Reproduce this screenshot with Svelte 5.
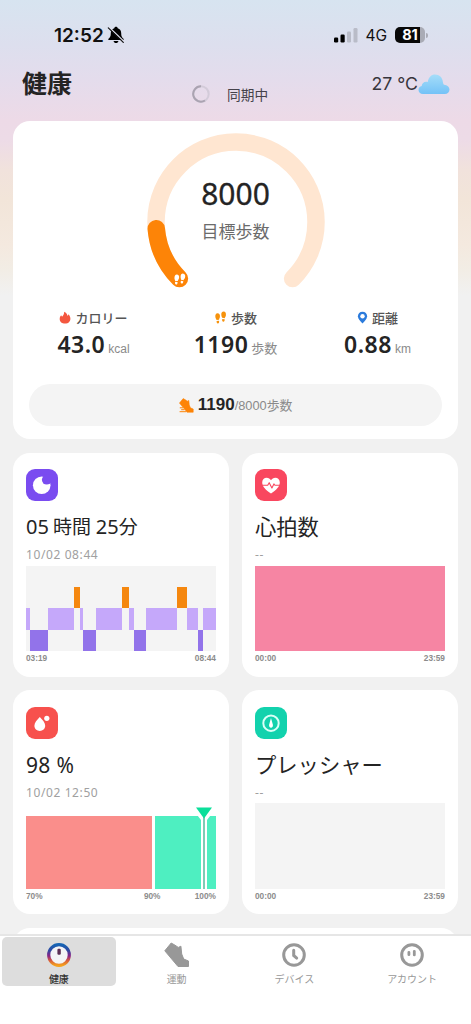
<script>
    // Daily goal and progress
    const goal = 8000;
    const steps = 1190;

    // 270 degree ring, the gap is at the bottom
    const ringLength = 2 * Math.PI * 80 * 0.75;
    const progress = ringLength * (steps / goal);

    // Sleep stages in order, width is relative
    const sleep = [
        { stage: "light", width: 12 },
        { stage: "deep", width: 53 },
        { stage: "light", width: 79 },
        { stage: "awake", width: 18 },
        { stage: "light", width: 10 },
        { stage: "deep", width: 38 },
        { stage: "light", width: 79 },
        { stage: "awake", width: 22 },
        { stage: "light", width: 13 },
        { stage: "deep", width: 37 },
        { stage: "light", width: 93 },
        { stage: "awake", width: 29 },
        { stage: "light", width: 34 },
        { stage: "deep", width: 16 },
        { stage: "light", width: 38 }
    ];

    const tabs = [
        { id: "health", label: "健康" },
        { id: "sport", label: "運動" },
        { id: "device", label: "デバイス" },
        { id: "account", label: "アカウント" }
    ];

    let active = $state("health");
</script>

{#snippet feet()}
    <path transform="translate(.5 1.300)" d="M1 5C.5 2.400 1.500.6 3.300.6s2.900 1.600 2.600 3.700C5.700 5.700 5.100 6.500 4.900 7.500L2.200 7.900C2 6.900 1.200 6.200 1 5zM2.300 8.900l2.600-.3c.4 1.700-.1 2.900-1.200 3-1 .1-1.500-1-1.400-2.700z" />
    <path d="M12.800 4.400c.4-2.600-.6-4.300-2.400-4.300S7.600 1.600 7.900 3.700c.1 1.400.7 2.200.9 3.200l2.800.4c.2-1.100 1-1.700 1.200-2.900zM11.500 8.300L8.900 8c-.4 1.700.1 2.900 1.200 3 1 .1 1.500-1 1.400-2.700z" />
{/snippet}

{#snippet shoe()}
    <path d="M7.200 1L.8 8.800 14 24.500h10.500V19l-4.800-2-2-5-.8-7.800-2.600 1.200L11 3.200z" stroke-linejoin="round" />
{/snippet}

<div class="screen">
    <div class="status">
        <span class="time">12:52</span>
        <svg class="bell" width="18" height="18" viewBox="0 0 18 18">
            <path d="M9 .8c1 0 1.600.6 1.700 1.400 2.300.7 3.500 2.500 3.500 5 0 3 .6 4.100 2.300 5.600.5.500.2 1.300-.5 1.300H2c-.7 0-1-.8-.5-1.300C3.200 11.300 3.800 10.200 3.800 7.200c0-2.500 1.200-4.300 3.500-5C7.400 1.400 8 .8 9 .8zM6.600 14.900h4.800c-.2 1.300-1.200 2.100-2.400 2.100s-2.200-.8-2.400-2.100z" />
            <path d="M2.100 1.200l14.900 14.300" stroke="#dfe0ee" stroke-width="1.300" />
            <path d="M1.300 1.900l15 14.500" stroke="#111" stroke-width="1.200" stroke-linecap="round" />
        </svg>
        <svg class="signal" width="24" height="15" viewBox="0 0 24 15">
            <rect x="0" y="9.500" width="4.200" height="5" rx="1.200" />
            <rect x="6.500" y="6.500" width="4.200" height="8" rx="1.200" />
            <rect x="13" y="3.500" width="4" height="11" rx="1.200" fill="#b9bcc8" />
            <rect x="19.500" y="0" width="4" height="14.500" rx="1.200" fill="#b9bcc8" />
        </svg>
        <span class="network">4G</span>
        <div class="battery"><span>81</span></div>
        <i class="cap"></i>
    </div>

    <header>
        <h1>健康</h1>
        <div class="sync">
            <svg width="18" height="18" viewBox="0 0 18 18" fill="none" stroke-width="2">
                <circle cx="9" cy="9" r="7.700" stroke="#d3cbd9" />
                <path d="M13 15.500A7.700 7.700 0 1 1 9 1.300" stroke="#aaa3b1" />
            </svg>
            <span>同期中</span>
        </div>
        <div class="weather">
            <span>27 °C</span>
            <svg width="32" height="22" viewBox="0 0 32 22">
                <defs>
                    <linearGradient id="cloud" x1="0" y1="0" x2="0" y2="1">
                        <stop offset="0" stop-color="#a5ddf9" />
                        <stop offset="1" stop-color="#74c2f7" />
                    </linearGradient>
                </defs>
                <path d="M5 21C2.200 21 .5 19.300.5 17c0-2 1.300-3.500 3.200-3.900.2-2.700 2-4.300 4.400-4.300.7 0 1.200.1 1.700.3C10.600 4.100 13.400 1.500 17 1.500c4.400 0 7.400 3 7.900 7.400.2 1.300.5 2.300 1.300 2.900 3 .6 5.300 2 5.300 4.700s-2 4.500-4.700 4.500z" fill="url(#cloud)" />
            </svg>
        </div>
    </header>

    <main>
        <section class="card summary">
            <div class="ring">
                <svg width="178" height="156" viewBox="0 0 178 156" fill="none">
                    <path d="M32.400 145.600A80 80 0 1 1 145.600 145.600" stroke="#ffe6d1" stroke-width="17.500" stroke-linecap="round" />
                    <path
                        d="M32.400 145.600A80 80 0 1 1 145.600 145.600"
                        stroke="#fd8407"
                        stroke-width="17.500"
                        stroke-linecap="round"
                        stroke-dasharray="{progress} 999"
                    />
                    <g fill="#fff" transform="translate(26 140) rotate(8 6 6) scale(.92)">{@render feet()}</g>
                </svg>
                <div class="goal">
                    <strong>{goal}</strong>
                    <span>目標歩数</span>
                </div>
            </div>

            <div class="stats">
                <div class="stat">
                    <div class="name">
                        <svg width="12" height="13" viewBox="0 0 12 13" fill="#f4573f">
                            <path d="M5.200.8c2 1 3 2.400 3.200 3.900.6-.3.9-.8 1-1.500 1.400 1.300 2 2.900 2 4.500 0 3-2.300 4.900-5.300 4.900S.7 10.700.7 7.900c0-1.600.6-2.700 1.500-3.700.2.8.6 1.200 1.200 1.400.9-1.200 1.900-2.500 1.800-4.800z" />
                        </svg>
                        カロリー
                    </div>
                    <div class="value"><b>43.0</b><small>kcal</small></div>
                </div>
                <div class="stat">
                    <div class="name">
                        <svg width="13" height="13" viewBox="0 0 14 13" fill="#f6920c">{@render feet()}</svg>
                        歩数
                    </div>
                    <div class="value"><b>{steps}</b><small class="jp">歩数</small></div>
                </div>
                <div class="stat">
                    <div class="name">
                        <svg width="11" height="13" viewBox="0 0 11 13">
                            <path d="M5.500.8c2.700 0 4.600 1.900 4.600 4.500 0 2.700-2.500 5.200-4.600 7.100C3.400 10.500.9 8 .9 5.300.9 2.700 2.800.8 5.500.8z" fill="#2b7bdc" />
                            <circle cx="5.500" cy="5.300" r="2.200" fill="#fff" />
                        </svg>
                        距離
                    </div>
                    <div class="value"><b>0.88</b><small>km</small></div>
                </div>
            </div>

            <div class="pill">
                <svg width="15" height="15" viewBox="0 0 15 15" fill="#fd8407" stroke="#fd8407">
                    <g transform="scale(.58)">{@render shoe()}</g>
                    <path d="M.8 9.800h3.400M2.200 11.700h3.400M.6 13.700h6.800" stroke-width="1" />
                </svg>
                <div><b>{steps}</b><span>/{goal}歩数</span></div>
            </div>
        </section>

        <section class="card">
            <svg class="icon" width="32" height="32" viewBox="0 0 32 32">
                <rect width="32" height="32" rx="9" fill="#7a4cf0" />
                <circle cx="15.700" cy="16.200" r="8.800" fill="#fff" />
                <circle cx="20.700" cy="10.800" r="4.800" fill="#7a4cf0" />
                <path d="M17 6l9-1v10z" fill="#7a4cf0" />
            </svg>
            <h2 class="duration"><b>05</b><i></i>時間 <b>25</b>分</h2>
            <time>10/02 08:44</time>
            <div class="chart sleep">
                {#each sleep as part}
                    <div class={part.stage} style="flex-grow: {part.width}"></div>
                {/each}
            </div>
            <div class="axis"><span>03:19</span><span>08:44</span></div>
        </section>

        <section class="card">
            <svg class="icon" width="32" height="32" viewBox="0 0 32 32">
                <rect width="32" height="32" rx="9" fill="#f9475f" />
                <path d="M16 24.500C11 21 7.200 17.500 7.200 13.400c0-2.800 2-4.700 4.500-4.700 1.800 0 3.300.9 4.300 2.500 1-1.600 2.500-2.500 4.300-2.500 2.500 0 4.500 1.900 4.500 4.700 0 4.100-3.800 7.600-8.800 11.100z" fill="#fff" />
                <path d="M7 16.300h5.700l1.500-2.600 2.700 5.200 2-4 1 1.400H25" fill="none" stroke="#f9475f" stroke-width="1.100" stroke-linejoin="round" />
            </svg>
            <h2>心拍数</h2>
            <time>--</time>
            <div class="chart heart"></div>
            <div class="axis"><span>00:00</span><span>23:59</span></div>
        </section>

        <section class="card">
            <svg class="icon" width="32" height="32" viewBox="0 0 32 32">
                <rect width="32" height="32" rx="9" fill="#f7514d" />
                <path d="M13.800 10c2.800 3 5.400 5.700 5.400 8.700 0 3.100-2.400 5.200-5.400 5.200s-5.400-2.100-5.400-5.200c0-3 2.600-5.700 5.400-8.700z" fill="#fff" />
                <circle cx="20.800" cy="11.300" r="2.600" fill="#fff" />
            </svg>
            <h2 class="percent">98 %</h2>
            <time>10/02 12:50</time>
            <div class="chart oxygen">
                <div class="low"></div>
                <div class="good"></div>
                <svg class="marker" width="16" height="82" viewBox="0 0 16 82">
                    <path d="M1.500 8.500h13L11 13v69H5V13z" fill="#fff" />
                    <path d="M7.300 8h1.400v74H7.300z" fill="#47b795" />
                    <path d="M0 .5h16L8 11.500z" fill="#0bdf9a" />
                </svg>
            </div>
            <div class="axis"><span>70%</span><span class="mid">90%</span><span>100%</span></div>
        </section>

        <section class="card">
            <svg class="icon" width="32" height="32" viewBox="0 0 32 32">
                <rect width="32" height="32" rx="9" fill="#12d2ad" />
                <circle cx="16" cy="16.200" r="7.700" fill="none" stroke="#d9fff7" stroke-width="2" />
                <path d="M16 11l1.900 6.800c.3 1.700-.6 2.900-1.900 2.900s-2.200-1.200-1.900-2.900z" fill="#fff" />
            </svg>
            <h2 class="kana">プレッシャー</h2>
            <time>--</time>
            <div class="chart"></div>
            <div class="axis"><span>00:00</span><span>23:59</span></div>
        </section>

        <section class="card wide"></section>
    </main>

    <nav>
        {#each tabs as tab}
            <button class:active={active === tab.id} onclick={() => (active = tab.id)}>
                <svg width="26" height="26" viewBox="0 0 26 26" fill="none">
                    {#if tab.id === "health"}
                        <defs>
                            <linearGradient id="rainbow" x1="0" y1="0" x2="0" y2="1">
                                <stop offset="0" stop-color="#1664b4" />
                                <stop offset=".28" stop-color="#3048a0" />
                                <stop offset=".55" stop-color="#8a2387" />
                                <stop offset=".78" stop-color="#d9603c" />
                                <stop offset="1" stop-color="#f5a01c" />
                            </linearGradient>
                        </defs>
                        <circle cx="13" cy="13" r="10.300" fill="#f4f4f6" stroke="url(#rainbow)" stroke-width="3.200" />
                        <rect x="11.400" y="6.800" width="3.400" height="6" rx="1.200" fill="#5b2f55" />
                    {:else if tab.id === "sport"}
                        <g fill="#989898" stroke="#989898">{@render shoe()}</g>
                    {:else if tab.id === "device"}
                        <circle cx="13" cy="13" r="10.300" stroke="#989898" stroke-width="3" />
                        <path d="M12.700 8.300v5.200l3 2.600" stroke="#989898" stroke-width="3" stroke-linecap="round" />
                    {:else}
                        <circle cx="13" cy="13" r="10.300" stroke="#989898" stroke-width="3" />
                        <path d="M9.900 10.300v2.400M15.300 9.300v3.600" stroke="#989898" stroke-width="2.800" stroke-linecap="round" />
                    {/if}
                </svg>
                <span>{tab.label}</span>
            </button>
        {/each}
    </nav>
</div>

<style>
    :global(body) {
        margin: 0;
        overflow: hidden;
    }

    .screen {
        display: flex;
        flex-direction: column;
        width: 471px;
        height: 1024px;
        overflow: hidden;
        color: #242424;
        font-family: "Noto Sans", "Noto Sans CJK JP", sans-serif;
        background: linear-gradient(#d7e4f0 0, #dddfee 45px, #e4dcec 80px, #eddae7 120px, #eddbe7 140px, #f1e2dc 170px, #f2e5d9 200px, #f4e9df 245px, #f2ede5 270px, #f1f1f1 295px);
    }

    /* Status bar */
    .status {
        display: flex;
        align-items: center;
        box-sizing: border-box;
        height: 58px;
        padding: 12px 43px 0 54px;
        color: #111;
        font-family: Inter, sans-serif;
    }

    .time {
        width: 52px;
        font-size: 19px;
        font-weight: 600;
    }

    .bell {
        margin-left: 1px;
    }

    .signal {
        margin-left: auto;
    }

    .network {
        margin-left: 7px;
        font-size: 15.500px;
    }

    .battery {
        width: 30px;
        height: 16px;
        margin-left: 8px;
        border-radius: 5px;
        background: linear-gradient(90deg, #080808 83%, #a9abb5 83%);
        color: #fff;
        font-size: 14.500px;
        font-weight: 700;
        line-height: 16px;
        text-align: center;
    }

    .cap {
        width: 2px;
        height: 5px;
        margin-left: 1px;
        border-radius: 0 2px 2px 0;
        background: #a9abb5;
    }

    /* Title row */
    header {
        display: grid;
        grid-template-columns: 170px 1fr 170px;
        height: 63px;
        font-family: "Noto Sans CJK JP", sans-serif;
    }

    h1 {
        margin: 6px 0 0 22px;
        font-size: 25px;
        font-weight: 700;
        line-height: 36px;
    }

    .sync {
        display: flex;
        align-items: center;
        gap: 17px;
        height: 20px;
        margin: 26px 0 0 22px;
        color: #45424a;
        font-size: 13.700px;
        font-weight: 400;
    }

    .weather {
        display: flex;
        justify-content: flex-end;
        height: 36px;
        margin-right: 21px;
        padding-top: 15px;
        color: #37353c;
        font-family: Inter, sans-serif;
        font-size: 17.700px;
        line-height: 22px;
    }

    /* Cards */
    main {
        display: grid;
        grid-template-columns: 216px 216px;
        grid-template-rows: 318px;
        grid-auto-rows: 224px;
        gap: 13.500px 13px;
        flex: 1;
        min-height: 0;
        padding: 0 13px;
        overflow: hidden;
    }

    .card {
        box-sizing: border-box;
        padding: 16.500px 13px 0;
        border-radius: 17px;
        background: #fff;
    }

    .summary {
        grid-column: span 2;
        padding: 12px 16px 0;
    }

    .wide {
        grid-column: span 2;
    }

    .ring {
        display: grid;
        justify-content: center;
        height: 173px;
    }

    .ring > * {
        grid-area: 1 / 1;
    }

    .goal {
        display: flex;
        flex-direction: column;
        align-items: center;
        padding-top: 41px;
    }

    .goal strong {
        font-size: 30px;
        font-weight: 400;
        line-height: 40px;
        -webkit-text-stroke: 0.3px #242424;
    }

    .goal span {
        margin-top: 6px;
        color: #6b6b6b;
        font-size: 17px;
        line-height: 24px;
    }

    .stats {
        display: grid;
        grid-template-columns: 129px 155px 129px;
    }

    .name {
        display: flex;
        align-items: center;
        justify-content: center;
        gap: 4px;
        height: 22px;
        color: #555;
        font-family: "Noto Sans CJK JP", sans-serif;
        font-size: 13px;
        font-weight: 500;
    }

    .value {
        display: flex;
        align-items: baseline;
        justify-content: center;
        gap: 3px;
        height: 32px;
        line-height: 32px;
    }

    .value b {
        font-size: 23px;
        font-weight: 600;
        letter-spacing: 0.5px;
    }

    .value small {
        color: #8a8a8a;
        font-family: "Liberation Sans", "Noto Sans CJK JP", sans-serif;
        font-size: 12px;
    }

    .value .jp {
        font-size: 13px;
    }

    .pill {
        display: flex;
        align-items: center;
        justify-content: center;
        gap: 4px;
        height: 42px;
        margin-top: 24px;
        border-radius: 21px;
        background: #f4f4f4;
        font-family: "Liberation Sans", "Noto Sans CJK JP", sans-serif;
        line-height: 42px;
    }

    .pill b {
        font-size: 17px;
    }

    .pill span {
        color: #8a8a8a;
        font-size: 12.800px;
    }

    .pill div {
        height: 42px;
    }

    .icon {
        display: block;
    }

    h2 {
        height: 30px;
        margin: 11px 0 0;
        font-size: 21.300px;
        font-weight: 400;
        line-height: 30px;
        white-space: nowrap;
    }

    .duration {
        font-size: 19px;
    }

    .duration b {
        font-size: 20px;
        font-weight: 400;
    }

    .duration i {
        display: inline-block;
        width: 4px;
    }

    .percent {
        font-size: 21px;
        letter-spacing: 0.3px;
    }

    time {
        display: block;
        height: 18px;
        margin-top: 3px;
        color: #a0a0a0;
        font-size: 12px;
        letter-spacing: 0.600px;
        line-height: 20px;
    }

    .chart {
        height: 85.500px;
        margin-top: 2.500px;
        background: #f4f4f4;
    }

    .sleep {
        display: flex;
        align-items: flex-end;
    }

    .sleep div {
        flex-basis: 0;
        height: 25%;
    }

    .light {
        margin-bottom: 21.400px;
        background: #c5a8fa;
    }

    .deep {
        background: #9273ea;
    }

    .awake {
        margin-bottom: 42.800px;
        background: #f5870f;
    }

    .heart {
        background: #f685a3;
    }

    .oxygen {
        position: relative;
        display: flex;
        gap: 3px;
        height: 72.500px;
        margin-top: 15.500px;
        background: #fff;
    }

    .low {
        width: 125.500px;
        background: #fa8e8b;
    }

    .good {
        flex: 1;
        background: #4eefc1;
    }

    .marker {
        position: absolute;
        top: -9px;
        left: 169.500px;
    }

    .axis {
        display: flex;
        justify-content: space-between;
        color: #8c8c8c;
        font-family: "Liberation Sans", sans-serif;
        font-size: 8.300px;
        font-weight: 700;
        line-height: 14px;
    }

    .mid {
        margin-left: 67px;
    }

    /* Bottom tabs */
    nav {
        display: grid;
        grid-template-columns: repeat(4, 1fr);
        align-items: start;
        box-sizing: border-box;
        height: 90px;
        padding-top: 1px;
        border-top: 2px solid #e6e6e6;
        background: #fff;
    }

    button {
        display: flex;
        flex-direction: column;
        align-items: center;
        height: 49px;
        margin: 0 2px;
        padding: 5px 0 0;
        border: 0;
        border-radius: 5px;
        background: none;
        color: #989898;
        font-family: "Noto Sans CJK JP", sans-serif;
        font-size: 10px;
        line-height: 14px;
    }

    button span {
        margin-top: 4px;
    }

    .active {
        background: #ddd;
        color: #333;
        font-weight: 500;
    }
</style>
